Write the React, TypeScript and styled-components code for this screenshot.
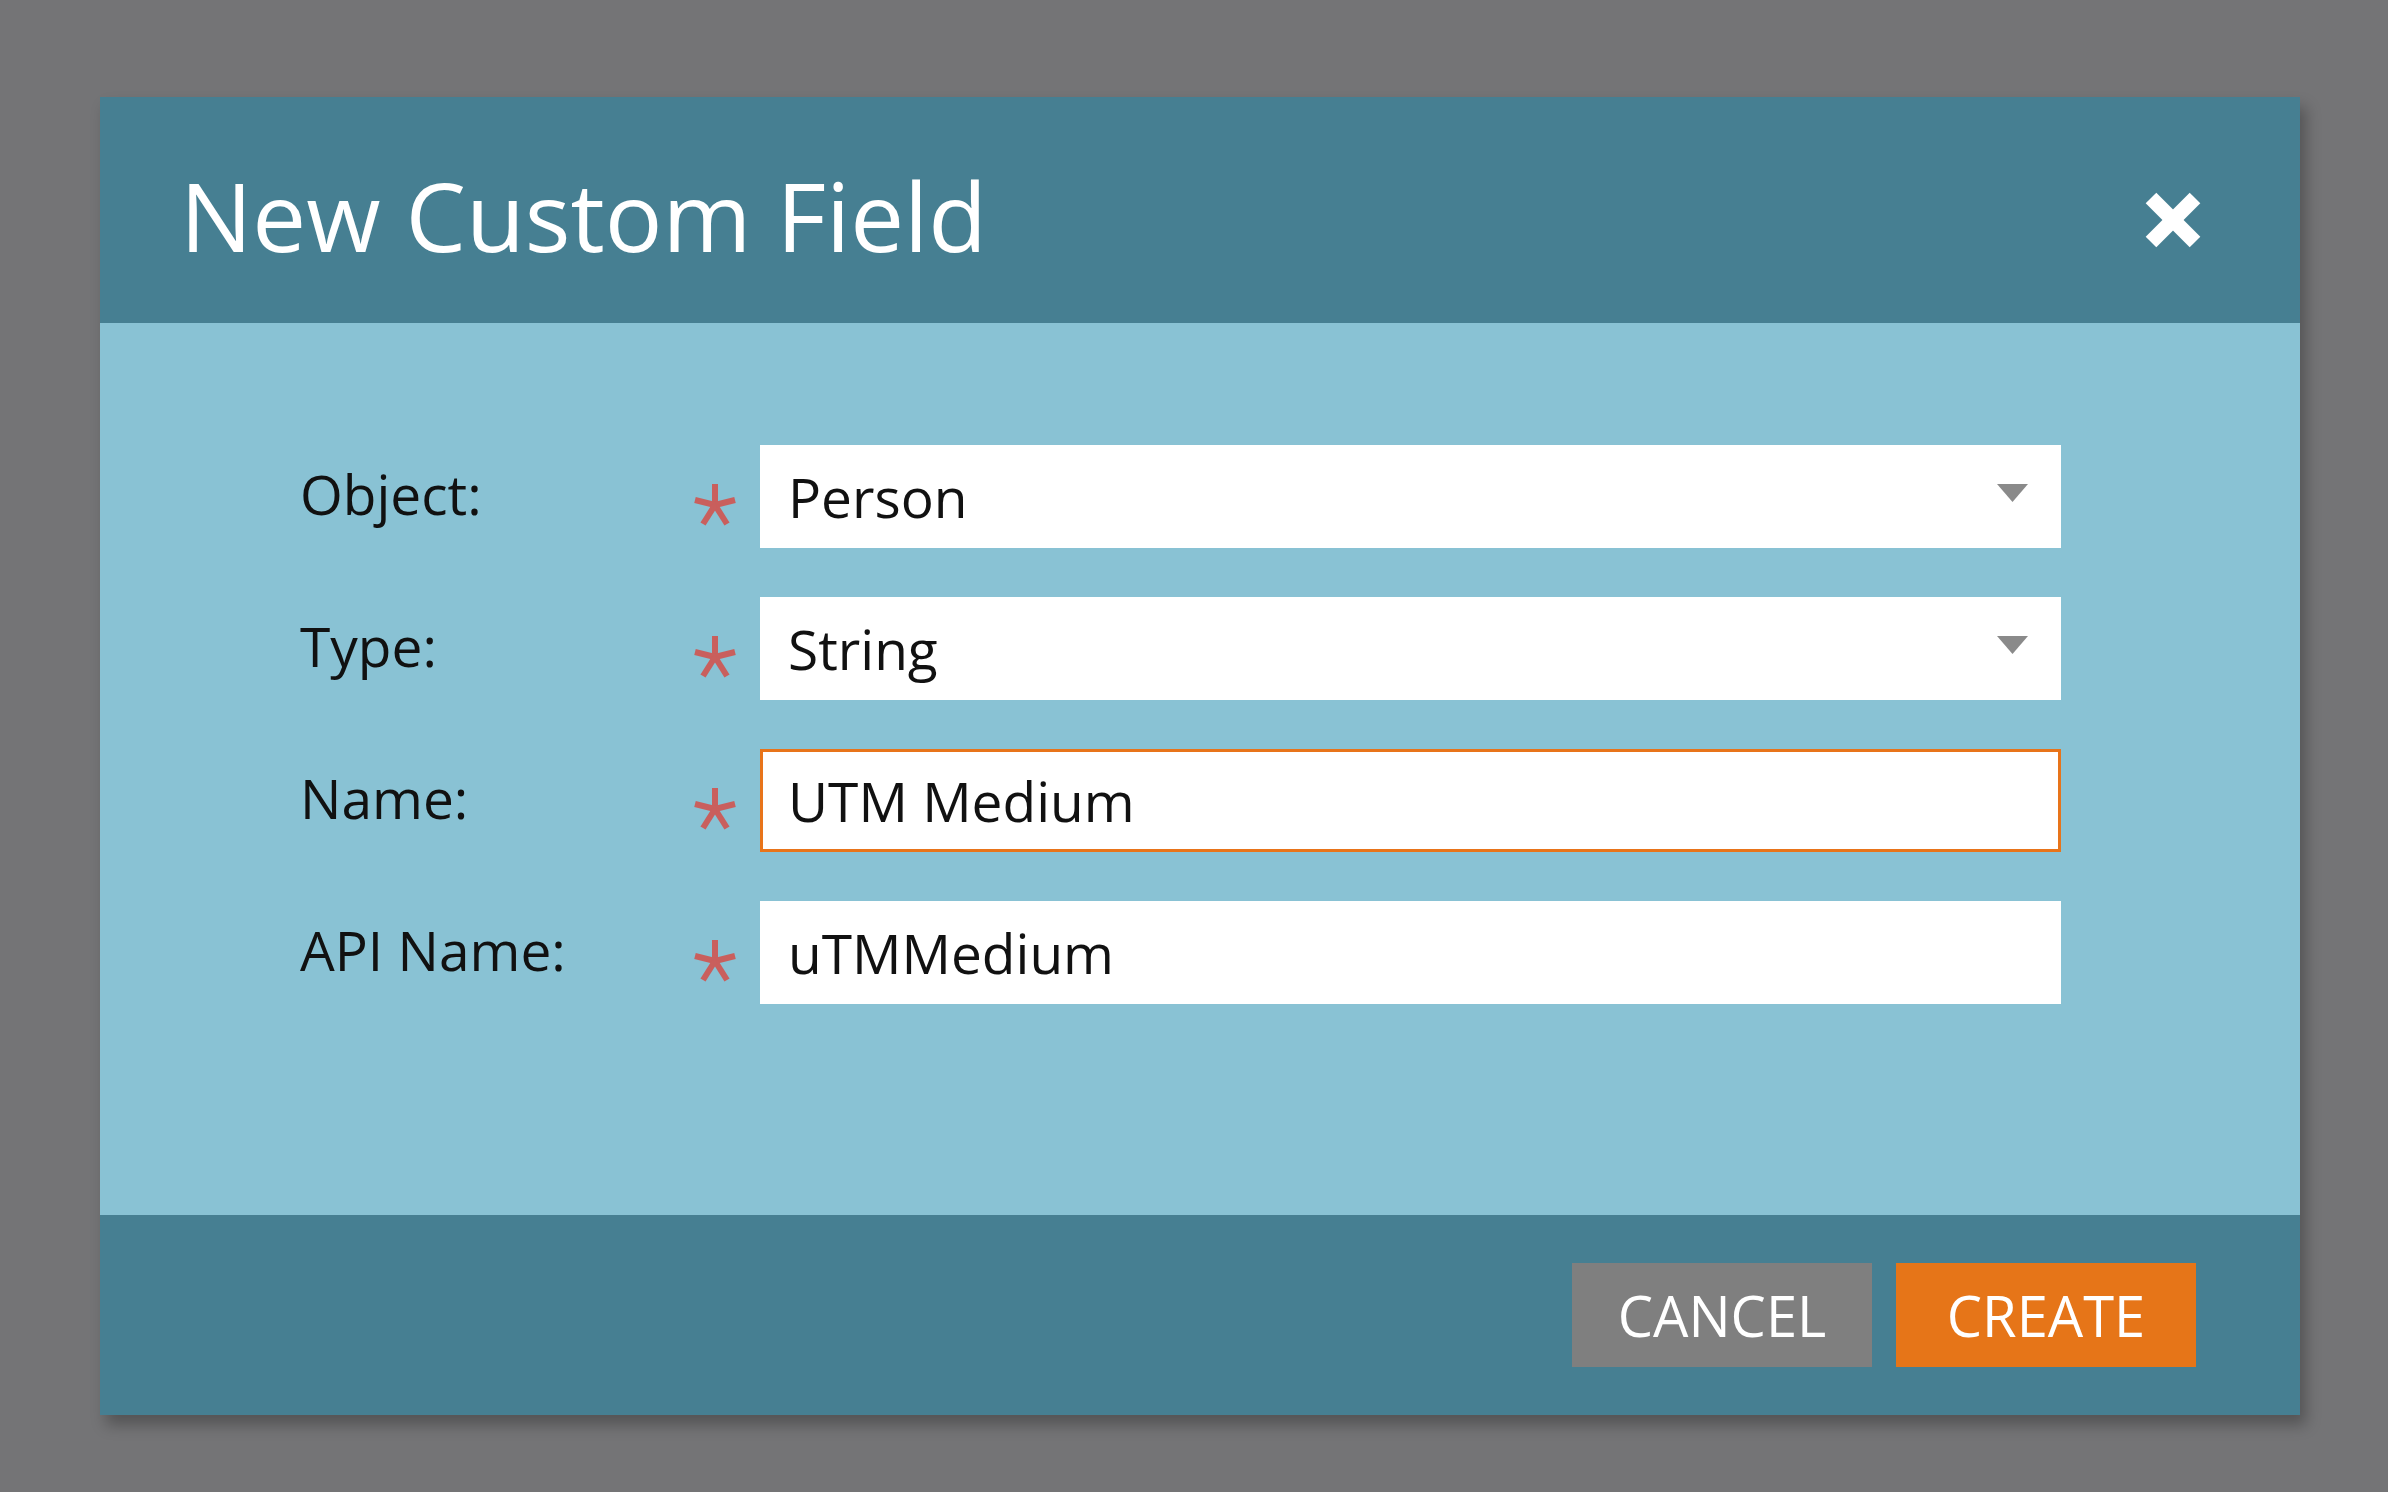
import React from "react";
import styled, { createGlobalStyle } from "styled-components";

const GlobalStyle = createGlobalStyle`
  html, body {
    margin: 0;
    padding: 0;
    background: #747476;
  }
  * {
    box-sizing: border-box;
  }
`;

const Page = styled.div`
  min-height: 1492px;
  padding: 97px 0 0 100px;
  font-family: "Open Sans", "Liberation Sans", sans-serif;
`;

const Dialog = styled.div`
  width: 2200px;
  display: flex;
  flex-direction: column;
  box-shadow: 6px 10px 14px rgba(0, 0, 0, 0.28);
`;

const Header = styled.div`
  height: 226px;
  background: #467f92;
  display: flex;
  align-items: center;
  justify-content: space-between;
  padding: 8px 98px 0 80px;
`;

const Title = styled.h1`
  margin: 0;
  color: #ffffff;
  font-size: 96px;
  font-weight: 400;
  line-height: normal;
`;

const CloseButton = styled.button`
  margin-top: 12px;
  width: 58px;
  height: 58px;
  padding: 0;
  border: none;
  background: transparent;
  cursor: pointer;
  display: flex;
`;

const Body = styled.div`
  background: #89c2d4;
  padding: 122px 239px 211px 200px;
  display: grid;
  grid-template-columns: 393px 67px 1fr;
  row-gap: 49px;
  align-items: center;
`;

const Label = styled.div`
  margin-top: -6px;
  font-size: 55px;
  color: #111;
  line-height: normal;
`;

const Required = styled.div`
  display: flex;
  margin-top: 16px;
`;

const Field = styled.div<{ $focused?: boolean }>`
  height: 103px;
  background: #ffffff;
  border: 3px solid ${(p) => (p.$focused ? "#e8741a" : "#ffffff")};
  padding: 0 30px 0 25px;
  display: flex;
  align-items: center;
  font-size: 55px;
  color: #111;
`;

const Caret = styled.svg`
  margin-left: auto;
  margin-top: -8px;
`;

const Footer = styled.div`
  height: 200px;
  background: #467f92;
  display: flex;
  justify-content: flex-end;
  align-items: center;
  gap: 24px;
  padding-right: 104px;
`;

const Button = styled.button<{ $primary?: boolean }>`
  width: 300px;
  height: 104px;
  border: none;
  padding: 0;
  background: ${(p) => (p.$primary ? "#e67518" : "#7f7f7f")};
  color: #ffffff;
  font-family: "Open Sans", "Liberation Sans", sans-serif;
  font-size: 56px;
  font-weight: 400;
  text-transform: uppercase;
  cursor: pointer;
`;

const Asterisk: React.FC = () => (
  <svg width="44" height="44" viewBox="0 0 44 44">
    <g stroke="#c95f5d" strokeWidth="6" strokeLinecap="butt">
      <line x1="22" y1="22" x2="22" y2="1" />
      <line x1="22" y1="22" x2="42" y2="17" />
      <line x1="22" y1="22" x2="2" y2="17" />
      <line x1="22" y1="22" x2="34" y2="41" />
      <line x1="22" y1="22" x2="10" y2="41" />
    </g>
  </svg>
);

const fields = [
  { label: "Object:", value: "Person", select: true },
  { label: "Type:", value: "String", select: true },
  { label: "Name:", value: "UTM Medium", focused: true },
  { label: "API Name:", value: "uTMMedium" },
];

const App: React.FC = () => {
  return (
    <Page>
      <GlobalStyle />
      <Dialog>
        <Header>
          <Title>New Custom Field</Title>
          <CloseButton aria-label="Close">
            <svg width="58" height="58" viewBox="0 0 58 58">
              <g stroke="#ffffff" strokeWidth="15">
                <line x1="7" y1="7" x2="51" y2="51" />
                <line x1="51" y1="7" x2="7" y2="51" />
              </g>
            </svg>
          </CloseButton>
        </Header>
        <Body>
          {fields.map((f) => (
            <React.Fragment key={f.label}>
              <Label>{f.label}</Label>
              <Required>
                <Asterisk />
              </Required>
              <Field $focused={f.focused}>
                {f.value}
                {f.select && (
                  <Caret width="31" height="18" viewBox="0 0 31 18">
                    <polygon points="0,0 31,0 15.5,18" fill="#8a8a8a" />
                  </Caret>
                )}
              </Field>
            </React.Fragment>
          ))}
        </Body>
        <Footer>
          <Button>Cancel</Button>
          <Button $primary>Create</Button>
        </Footer>
      </Dialog>
    </Page>
  );
};

export default App;
